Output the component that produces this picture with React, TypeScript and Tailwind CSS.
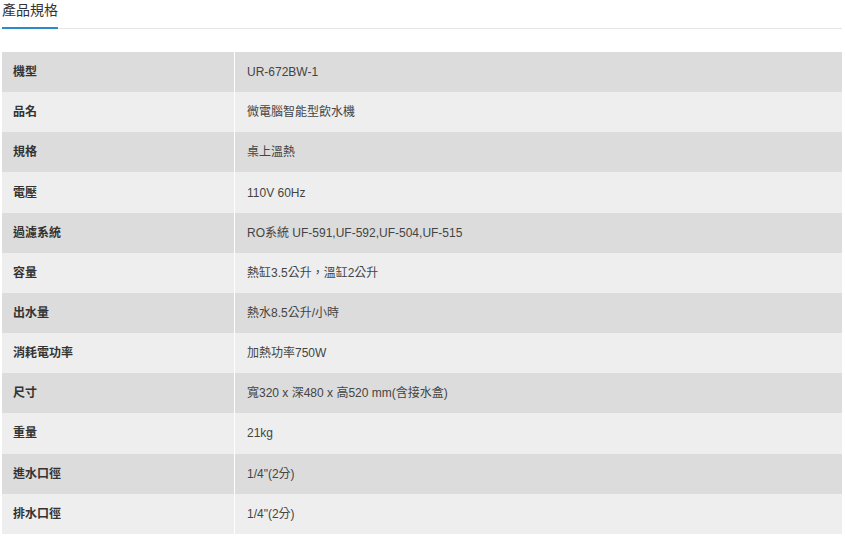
const SPECS: [string, string][] = [
  ["機型", "UR-672BW-1"],
  ["品名", "微電腦智能型飲水機"],
  ["規格", "桌上溫熱"],
  ["電壓", "110V 60Hz"],
  ["過濾系統", "RO系統 UF-591,UF-592,UF-504,UF-515"],
  ["容量", "熱缸3.5公升，溫缸2公升"],
  ["出水量", "熱水8.5公升/小時"],
  ["消耗電功率", "加熱功率750W"],
  ["尺寸", "寬320 x 深480 x 高520 mm(含接水盒)"],
  ["重量", "21kg"],
  ["進水口徑", "1/4\"(2分)"],
  ["排水口徑", "1/4\"(2分)"],
];

export default function App() {
  return (
    <div className="w-[845px] h-[537px] bg-white overflow-hidden [font-family:'Liberation_Sans','Noto_Sans_CJK_TC',sans-serif] text-[#333]">
      <div className="mx-[2px] w-[840px]">
        <div className="border-b border-[#e6e6e6] h-[29px] flex">
          <div className="w-[56px] border-b-2 border-[#2b8ccb] -mb-[1px] text-[14px] leading-[20px] text-[#333]">
            產品規格
          </div>
        </div>
        <div className="mt-[23px]">
          {SPECS.map(([label, value], i) => (
            <div
              key={label}
              className={
                "flex h-[40.17px] items-center text-[12px] " +
                (i % 2 === 0 ? "bg-[#dcdcdc]" : "bg-[#eeeeee]")
              }
            >
              <div className="w-[233px] h-full flex items-center pl-[11px] font-bold border-r border-white">
                {label}
              </div>
              <div className="flex-1 h-full flex items-center pl-[12px] text-[#444]">
                {value}
              </div>
            </div>
          ))}
        </div>
      </div>
    </div>
  );
}
